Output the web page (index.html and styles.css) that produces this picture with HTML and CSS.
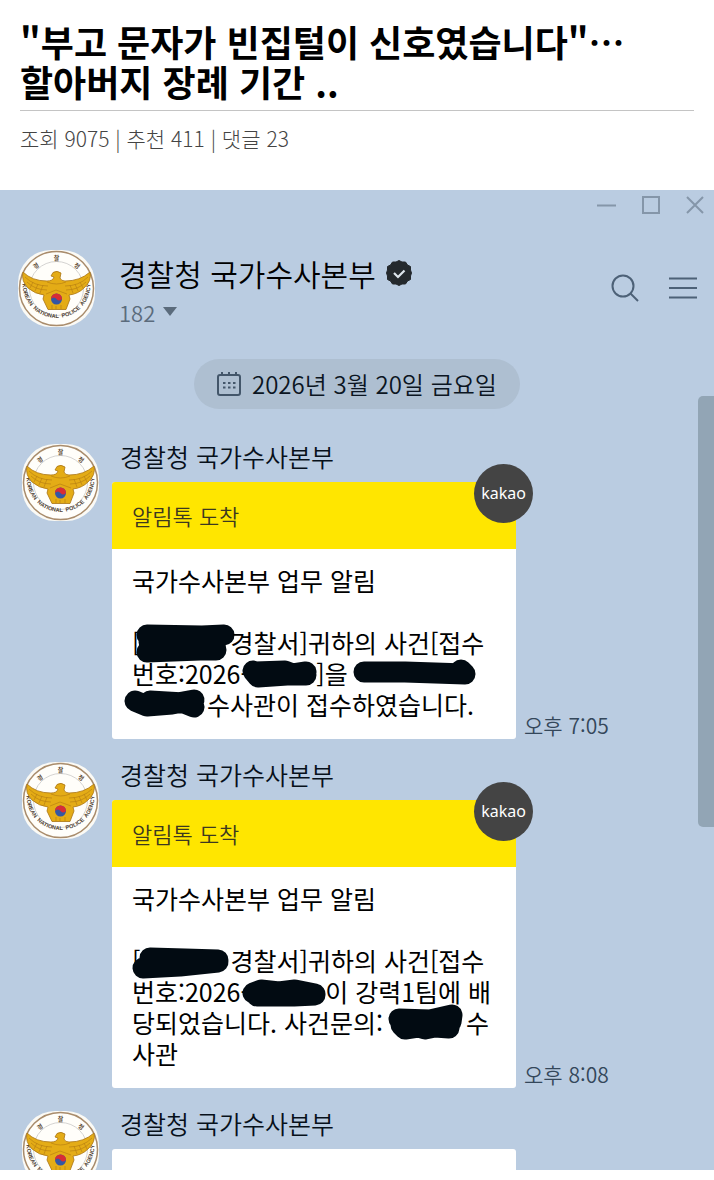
FILE: index.html
```html
<!DOCTYPE html>
<html lang="ko">
<head>
    <meta charset="UTF-8">
    <meta name="viewport" content="width=device-width, initial-scale=1.0">
    <title>"부고 문자가 빈집털이 신호였습니다"</title>
    <link rel="stylesheet" href="styles.css">
</head>
<body>
    <!-- shared emblem, reused by every avatar -->
    <svg class="defs" aria-hidden="true">
        <symbol id="emblem" viewBox="0 0 77 77">
            <rect x="0" y="0" width="77" height="77" rx="33" fill="#fbfaf5"/>
            <circle cx="38.5" cy="38.5" r="37" fill="#fffefa" stroke="#a98c6c" stroke-width="1.5"/>
            <circle cx="38.5" cy="38.5" r="27" fill="none" stroke="#c9c8c6" stroke-width="0.8"/>
            <g fill="#5d4a35" font-size="6" font-weight="700" text-anchor="middle">
                <text x="18" y="18" transform="rotate(-35 18 16)">경</text>
                <text x="38.5" y="10">찰</text>
                <text x="59" y="18" transform="rotate(35 59 16)">청</text>
            </g>
            <path id="ring" d="M4.5 34 A34 34 0 1 0 72.5 34" fill="none"/>
            <text class="ring-text" font-size="5.6" font-weight="700" fill="#4f4335" text-anchor="middle"><textPath href="#ring" startOffset="50%">KOREAN&#160; NATIONAL&#160; POLICE&#160; AGENCY</textPath></text>
            <path d="M33 26 L35 22.5 Q39 20 43 23 L42 28 Q43 31 47 31 Q62 31 72 22 Q74 31 66 38 Q60 44 51 45 L52 49 L48 59.5 H30 L25 49 L26 45 Q17 44 10 38 Q3 31 5 22 Q14 31 29 31 Q35 31 36 27 Z" fill="#e4ac16" stroke="#a97413" stroke-width="0.8"/>
            <g fill="none" stroke="#b98113" stroke-width="0.7">
                <path d="M7 27 Q16 36 30 36 M9 32 Q17 40 29 40 M70 27 Q61 36 47 36 M68 32 Q60 40 48 40"/>
                <path d="M15 32 L12 38 M20 34 L17 41 M25 35 L22 43 M62 32 L65 38 M57 34 L60 41 M52 35 L55 43"/>
                <path d="M29 32 Q38.5 36 48 32 M28 44 L38 40 L49 44 M34 55 V59 M38 56 V59 M43 55 V59"/>
            </g>
            <circle cx="38.5" cy="49" r="5.5" fill="#3457a4"/>
            <path d="M33 49 A5.5 5.5 0 0 1 44 49 Q41 52 38.5 49 Q36 46 33 49 Z" fill="#d82c35"/>
        </symbol>
    </svg>

    <header class="post-header">
        <h1>"부고 문자가 빈집털이 신호였습니다"⋯<br>할아버지 장례 기간 ..</h1>
        <p class="post-meta">조회 9075 | 추천 411 | 댓글 23</p>
    </header>

    <main class="chat">
        <div class="window-bar">
            <button type="button" aria-label="최소화"><svg width="20" height="20"><path d="M0 10.5 H19"/></svg></button>
            <button type="button" aria-label="최대화"><svg width="20" height="20"><rect x="2" y="2" width="16" height="16"/></svg></button>
            <button type="button" aria-label="닫기"><svg width="20" height="20"><path d="M2 2 L18 18 M18 2 L2 18"/></svg></button>
        </div>

        <div class="chat-header">
            <svg class="avatar" role="img" aria-label="경찰청"><use href="#emblem"/></svg>
            <div class="chat-info">
                <h2>경찰청 국가수사본부
                    <svg class="verified" viewBox="0 0 26 26" role="img" aria-label="인증됨">
                        <path d="M13 .5 L16 2 L19.5 2 L21.5 5 L24.5 6.5 L24.5 10 L25.5 13 L24.5 16 L24.5 19.5 L21.5 21 L19.5 24 L16 24 L13 25.5 L10 24 L6.5 24 L4.5 21 L1.5 19.5 L1.5 16 L.5 13 L1.5 10 L1.5 6.5 L4.5 5 L6.5 2 L10 2 Z" fill="#24292d" stroke="#24292d" stroke-linejoin="round"/>
                        <path d="M8 13 L12 17 L18.5 10.5" fill="none" stroke="#dde5ec" stroke-width="2.2"/>
                    </svg>
                </h2>
                <button type="button" class="members">182 <svg width="14" height="10"><path d="M0 0 H14 L7 9 Z"/></svg></button>
            </div>
            <div class="chat-actions">
                <button type="button" aria-label="검색"><svg width="28" height="28"><circle cx="12" cy="12" r="10.5"/><path d="M19.5 19.5 L27 27"/></svg></button>
                <button type="button" aria-label="메뉴"><svg width="28" height="28"><path d="M0 4.5 H28 M0 14 H28 M0 23.5 H28"/></svg></button>
            </div>
        </div>

        <div class="date">
            <svg width="24" height="26" viewBox="0 0 24 26">
                <rect x="1" y="4" width="22" height="20" rx="2"/>
                <path d="M5 1 V5 M12 1 V5 M19 1 V5"/>
                <path d="M6 12 h2.5 M11 12 h2.5 M16 12 h2.5 M6 16.5 h2.5 M11 16.5 h2.5 M16 16.5 h2.5"/>
            </svg>
            <time datetime="2026-03-20">2026년 3월 20일 금요일</time>
        </div>

        <article class="message">
            <svg class="avatar" role="img" aria-label="경찰청"><use href="#emblem"/></svg>
            <div class="content">
                <h3>경찰청 국가수사본부</h3>
                <div class="row">
                    <div class="bubble">
                        <div class="bubble-head">알림톡 도착</div>
                        <span class="badge">kakao</span>
                        <div class="bubble-body">
                            <p>국가수사본부 업무 알림</p>
                            <p>[<svg class="marker" width="90" height="31"><path d="M7 8 L62 9 L84 8 M9 15 H76 M7 25 L60 23 L76 23"/></svg>경찰서]귀하의 사건[접수<br>번호:2026-<svg class="marker" width="67" height="31"><path d="M4 13 L9 19 L38 17 L57 17 M6 14 L36 13 L44 16 L57 14"/></svg>]을 <svg class="marker" width="122" height="31"><path d="M9 14 L50 14 L110 16 M106 12 L110 16"/></svg><br><svg class="marker" width="75" height="31"><path d="M3 12 L15 17 L40 15 L62 11 M18 12 L52 14 L62 18"/></svg>수사관이 접수하였습니다.</p>
                        </div>
                    </div>
                    <time>오후 7:05</time>
                </div>
            </div>
        </article>

        <article class="message">
            <svg class="avatar" role="img" aria-label="경찰청"><use href="#emblem"/></svg>
            <div class="content">
                <h3>경찰청 국가수사본부</h3>
                <div class="row">
                    <div class="bubble">
                        <div class="bubble-head">알림톡 도착</div>
                        <span class="badge">kakao</span>
                        <div class="bubble-body">
                            <p>국가수사본부 업무 알림</p>
                            <p>[<svg class="marker" width="90" height="31"><path d="M10 13 L45 14 L78 15 M3 23 L40 21 L78 17"/></svg>경찰서]귀하의 사건[접수<br>번호:2026-<svg class="marker" width="76" height="31"><path d="M4 17 L12 14 L30 16 L46 14 L66 18 M8 20 L45 20 L66 19"/></svg>이 강력1팀에 배<br>당되었습니다. 사건문의: <svg class="marker" width="76" height="31"><path d="M9 12 L40 13 L62 8 L61 15 M11 18 L15 22 L28 20 L35 22 L45 20 L59 21"/></svg>수<br>사관</p>
                        </div>
                    </div>
                    <time>오후 8:08</time>
                </div>
            </div>
        </article>

        <article class="message">
            <svg class="avatar" role="img" aria-label="경찰청"><use href="#emblem"/></svg>
            <div class="content">
                <h3>경찰청 국가수사본부</h3>
                <div class="row">
                    <div class="bubble">
                        <div class="bubble-body"></div>
                    </div>
                </div>
            </div>
        </article>

        <div class="scroll-thumb"></div>
    </main>
</body>
</html>
```
FILE: styles.css
```css
* {
    box-sizing: border-box;
}
body {
    font-family: "Noto Sans CJK KR", sans-serif;
    margin: 0;
    padding-bottom: 10px;
    height: 100vh;
    display: flex;
    flex-direction: column;
    background: #fff;
    color: #000;
}
h1, h2, h3, p {
    margin: 0;
    font-weight: 400;
}
button {
    background: none;
    border: none;
    padding: 0;
    font: inherit;
    color: inherit;
    cursor: pointer;
}
svg {
    flex-shrink: 0;
}
.defs {
    position: absolute;
    width: 0;
    height: 0;
}
.post-header {
    padding: 21px 20px 36px;
}
.post-header h1 {
    font-size: 36px;
    line-height: 40px;
    font-weight: 700;
    padding-bottom: 9px;
    border-bottom: 1px solid #c4c4c4;
}
.post-meta {
    margin-top: 11px;
    font-size: 21px;
    line-height: 32px;
    font-weight: 300;
    color: #444;
}
.chat {
    position: relative;
    flex: 1;
    min-height: 0;
    overflow: hidden;
    background: #bacce1;
    font-weight: 350;
}
.window-bar {
    display: flex;
    justify-content: flex-end;
    gap: 24px;
    padding: 5px 9px 0;
}
.window-bar svg {
    display: block;
    fill: none;
    stroke: #8596a9;
    stroke-width: 2;
}
.chat-header {
    display: flex;
    align-items: flex-start;
    padding: 35px 17px 0 18px;
}
.avatar {
    width: 77px;
    height: 77px;
}
.ring-text {
    font-family: "Liberation Sans", sans-serif;
}
.chat-info {
    flex: 1;
    padding-left: 24px;
}
.chat-info h2 {
    display: flex;
    align-items: center;
    gap: 10px;
    font-size: 30px;
    line-height: 46px;
    font-weight: 350;
}
.verified {
    width: 26px;
    height: 26px;
}
.members {
    display: flex;
    align-items: center;
    gap: 8px;
    font-size: 22px;
    line-height: 32px;
    color: #5b6b7c;
}
.members path {
    fill: #5b6b7c;
}
.chat-actions {
    display: flex;
    gap: 30px;
    padding-top: 24px;
}
.chat-actions svg {
    display: block;
    fill: none;
    stroke: #4d6177;
    stroke-width: 2;
}
.date {
    display: flex;
    align-items: center;
    gap: 11px;
    width: fit-content;
    margin: 31px auto 35px 194px;
    padding: 0 23px;
    border-radius: 26px;
    background: #aebfd1;
    color: #0b1522;
    font-size: 24px;
    line-height: 50px;
}
.date svg {
    fill: none;
    stroke: #43566a;
    stroke-width: 2;
}
.message {
    display: flex;
    gap: 13px;
    padding-left: 22px;
    margin-bottom: 23px;
}
.content {
    flex: 1;
}
.message h3 {
    margin-bottom: 14px;
    padding-left: 8px;
    font-size: 25px;
    line-height: 24px;
    font-weight: 350;
    color: #07101a;
}
.row {
    display: flex;
    align-items: flex-end;
    gap: 8px;
}
.bubble {
    position: relative;
    flex: 0 1 404px;
    border-radius: 3px;
    background: #fff;
}
.bubble-head {
    padding: 0 20px;
    font-size: 22px;
    line-height: 67px;
    border-radius: 3px 3px 0 0;
    background: #ffe600;
    color: #3c3820;
}
.badge {
    position: absolute;
    top: -18px;
    right: -17px;
    width: 59px;
    border-radius: 50%;
    background: #444;
    color: #fff;
    font-family: "Noto Sans", sans-serif;
    font-size: 16px;
    font-weight: 400;
    line-height: 59px;
    text-align: center;
}
.bubble-body {
    padding: 16px 20px 19px;
    font-size: 25px;
    line-height: 31px;
    white-space: nowrap;
}
.bubble-body p + p {
    margin-top: 31px;
}
/* blacked-out names and numbers */
.marker {
    vertical-align: top;
    overflow: visible;
    fill: none;
    stroke: #020b12;
    stroke-width: 21;
    stroke-linecap: round;
    stroke-linejoin: round;
}
.row time {
    font-size: 21px;
    line-height: 28px;
    color: #34475a;
}
.scroll-thumb {
    position: absolute;
    top: 21%;
    right: 0;
    width: 16px;
    height: 44%;
    border-radius: 5px 0 0 5px;
    background: #92a5b5;
}
```
